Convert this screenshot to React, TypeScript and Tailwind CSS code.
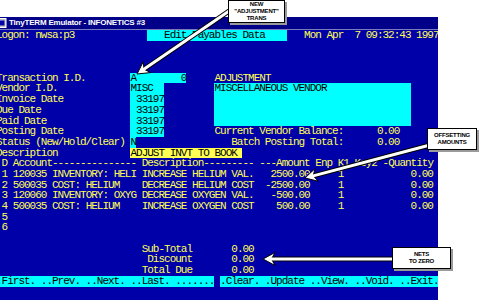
import React from 'react'

type Seg = [number, string, ('c' | 'y')?]

const field35 = ' '.repeat(35)

const rows: Seg[][] = [
  [[0, 'Logon: nwsa:p3'], [27, '   Edit Payables Data    ', 'c'], [55, 'Mon Apr  7 09:32:43 1997']],
  [],
  [],
  [],
  [[0, 'Transaction I.D.'], [24, 'A        0', 'c'], [39, 'ADJUSTMENT']],
  [[0, 'Vendor I.D.'], [24, 'MISC  ', 'c'], [39, 'MISCELLANEOUS VENDOR'.padEnd(35), 'c']],
  [[0, 'Invoice Date'], [24, ' 33197', 'c'], [39, field35, 'c']],
  [[0, 'Due Date'], [24, ' 33197', 'c'], [39, field35, 'c']],
  [[0, 'Paid Date'], [24, ' 33197', 'c'], [39, field35, 'c']],
  [[0, 'Posting Date'], [24, ' 33197', 'c'], [39, 'Current Vendor Balance:'], [68, '0.00']],
  [[0, 'Status (New/Hold/Clear)'], [24, 'N', 'c'], [42, 'Batch Posting Total:'], [68, '0.00']],
  [[0, 'Description'], [24, 'ADJUST INVT TO BOOK ', 'y']],
  [
    [1, 'D Account' + '-'.repeat(15)],
    [26, 'Description' + '-'.repeat(9)],
    [47, '---Amount'],
    [57, 'Enp'],
    [61, 'K1'],
    [64, 'Key2'],
    [69, '-Quantity'],
  ],
  [[1, '1 120035 INVENTORY: HELI'], [26, 'INCREASE HELIUM VAL.'], [49, '2500.00'], [61, '1'], [74, '0.00']],
  [[1, '2 500035 COST: HELIUM'], [26, 'DECREASE HELIUM COST'], [48, '-2500.00'], [61, '1'], [74, '0.00']],
  [[1, '3 120060 INVENTORY: OXYG'], [26, 'DECREASE OXYGEN VAL.'], [49, '-500.00'], [61, '1'], [74, '0.00']],
  [[1, '4 500035 COST: HELIUM'], [26, 'INCREASE OXYGEN COST'], [50, '500.00'], [61, '1'], [74, '0.00']],
  [[1, '5']],
  [[1, '6']],
  [],
  [[26, 'Sub-Total'], [42, '0.00']],
  [[27, 'Discount'], [42, '0.00']],
  [[26, 'Total Due'], [42, '0.00']],
  [
    [0, '.First. ..Prev. ..Next. ..Last. .......', 'c'],
    [40, '.Clear. .Update ..View. ..Void. ..Exit. ', 'c'],
  ],
]

function Line({ segs }: { segs: Seg[] }) {
  const out: React.ReactNode[] = []
  let col = 0
  segs.forEach(([c, t, k], i) => {
    if (c > col) out.push(<span key={'g' + i}>{' '.repeat(c - col)}</span>)
    out.push(
      <span
        key={i}
        className={
          k === 'c' ? 'bg-[#00ffff] text-black' : k === 'y' ? 'bg-[#ffff54] text-black' : ''
        }
      >
        {t}
      </span>
    )
    col = c + t.length
  })
  return <div className="flex h-[10.7px] whitespace-pre">{out}</div>
}

function Arrow({ x1, y1, x2, y2 }: { x1: number; y1: number; x2: number; y2: number }) {
  const dx = x2 - x1
  const dy = y2 - y1
  const len = Math.hypot(dx, dy)
  const ux = dx / len
  const uy = dy / len
  const nx = -uy
  const ny = ux
  const L = 12
  const W = 6.5
  const bx = x2 - ux * L
  const by = y2 - uy * L
  const mx = x2 - ux * (L - 3.5)
  const my = y2 - uy * (L - 3.5)
  const pts = `${x2},${y2} ${bx + nx * W},${by + ny * W} ${mx},${my} ${bx - nx * W},${by - ny * W}`
  return (
    <g>
      <line x1={x1} y1={y1} x2={mx} y2={my} stroke="black" strokeWidth={5} />
      <polygon points={pts} fill="white" stroke="black" strokeWidth={1} strokeLinejoin="miter" />
      <line x1={x1} y1={y1} x2={mx + ux * 2} y2={my + uy * 2} stroke="white" strokeWidth={3} />
    </g>
  )
}

function Callout({ className, lines }: { className: string; lines: string[] }) {
  return (
    <div
      className={`absolute flex flex-col items-center justify-center bg-white border border-black shadow-[2px_2px_0_#9a9a9a] font-['Liberation_Sans',Arial,sans-serif] font-bold text-[6px] leading-[7px] tracking-[-0.2px] text-black ${className}`}
    >
      {lines.map(l => (
        <span key={l}>{l}</span>
      ))}
    </div>
  )
}

export default function App() {
  return (
    <div className="relative w-[480px] h-[300px] overflow-hidden bg-white flex flex-col">
      <div className="h-[17px] shrink-0" />
      <div className="w-[438px] flex-1 flex flex-col">
        {/* title bar */}
        <div className="h-[12px] shrink-0 flex items-center bg-[#000088] text-white font-['Liberation_Sans',Arial,sans-serif] font-bold text-[8px] tracking-[-0.2px]">
          <svg width="7" height="10" viewBox="0 0 7 10" className="shrink-0">
            <rect x="-3" y="0.5" width="9" height="9" fill="#c0c0c0" stroke="#ffffff" strokeWidth="1" />
            <rect x="-1" y="2.5" width="5.5" height="5" fill="#0000a8" />
          </svg>
          <span className="ml-[2px] leading-none">TinyTERM Emulator - INFONETICS #3</span>
        </div>
        <div className="h-px shrink-0 bg-[#7b7bbd]" />
        {/* terminal screen */}
        <div className="flex-1 overflow-hidden bg-[#0000a8]">
          <div className="ml-[-4px] font-['Liberation_Mono','DejaVu_Sans_Mono',monospace] text-[11px] tracking-[-1px] leading-[10.7px] text-[#ffff54]">
            {rows.map((r, i) => (
              <Line key={i} segs={r} />
            ))}
          </div>
        </div>
      </div>

      {/* annotation arrows */}
      <svg className="absolute left-0 top-0" width="480" height="300">
        <Arrow x1={232} y1={9} x2={137} y2={74} />
        <Arrow x1={430} y1={145} x2={305} y2={178} />
        <Arrow x1={394} y1={259} x2={263} y2={259} />
      </svg>

      <Callout className="left-[228px] top-0 w-[57px] h-[23px]" lines={['NEW', '"ADJUSTMENT"', 'TRANS']} />
      <Callout className="left-[427px] top-[128px] w-[50px] h-[22px]" lines={['OFFSETTING', 'AMOUNTS']} />
      <Callout className="left-[392px] top-[247px] w-[59px] h-[22px]" lines={['NETS', 'TO ZERO']} />
    </div>
  )
}
